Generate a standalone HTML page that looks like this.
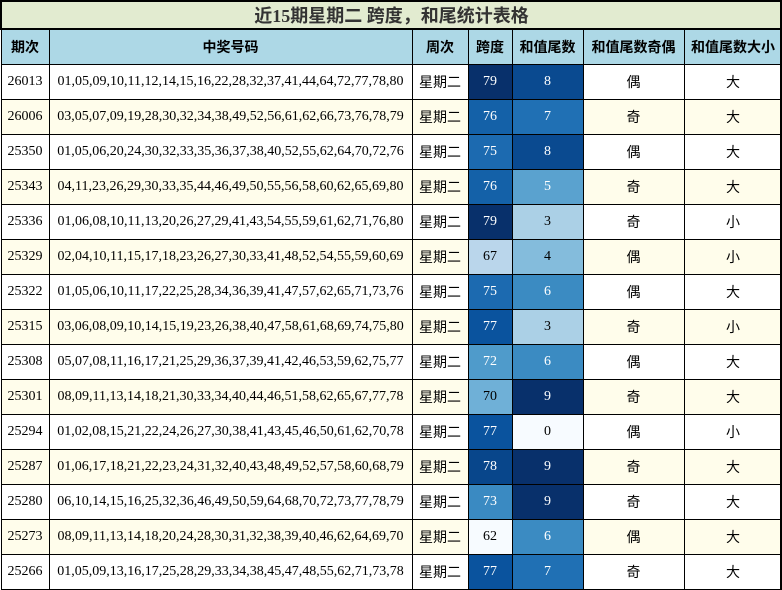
<!DOCTYPE html>
<html><head><meta charset="utf-8"><style>
body{margin:0;width:782px;height:589px;overflow:hidden;background:#fff}
table{border-collapse:collapse;table-layout:fixed;width:781px;position:absolute;left:0;top:0}
td,th{border:1px solid #000;padding:0;text-align:center;overflow:hidden;white-space:nowrap}
.t td{height:26px;background:#e2ebd0;font:bold 18px "Liberation Serif","Noto Sans CJK SC",serif;color:#333;border-width:2px 2px 2px 2px}
th{height:34px;background:#add8e6;font:bold 14px "Liberation Sans","Noto Sans CJK SC",sans-serif;color:#000}
td.d{height:34px;font:14px "Liberation Serif","Noto Sans CJK SC",serif;color:#000}
tr.y td.d{background:#fffdeb}
.c{font-family:"Noto Sans CJK SC",sans-serif!important}
.w{color:#fff!important}
.rb{position:absolute;left:780px;top:0;width:2px;height:589px;background:#000}
</style></head><body>
<table>
<colgroup><col style="width:48px"><col style="width:363px"><col style="width:56px"><col style="width:44px"><col style="width:71px"><col style="width:101px"><col style="width:98px"></colgroup>
<tr class="t"><td colspan="7">近15期星期二 跨度，和尾统计表格</td></tr>
<tr><th>期次</th><th>中奖号码</th><th>周次</th><th>跨度</th><th>和值尾数</th><th>和值尾数奇偶</th><th>和值尾数大小</th></tr>
<tr><td class="d">26013</td><td class="d">01,05,09,10,11,12,14,15,16,22,28,32,37,41,44,64,72,77,78,80</td><td class="d c">星期二</td><td class="d w" style="background:#08306b">79</td><td class="d w" style="background:#0a4a90">8</td><td class="d c">偶</td><td class="d c">大</td></tr>
<tr class="y"><td class="d">26006</td><td class="d">03,05,07,09,19,28,30,32,34,38,49,52,56,61,62,66,73,76,78,79</td><td class="d c">星期二</td><td class="d w" style="background:#1461a8">76</td><td class="d w" style="background:#2070b4">7</td><td class="d c">奇</td><td class="d c">大</td></tr>
<tr><td class="d">25350</td><td class="d">01,05,06,20,24,30,32,33,35,36,37,38,40,52,55,62,64,70,72,76</td><td class="d c">星期二</td><td class="d w" style="background:#1c6ab0">75</td><td class="d w" style="background:#0a4a90">8</td><td class="d c">偶</td><td class="d c">大</td></tr>
<tr class="y"><td class="d">25343</td><td class="d">04,11,23,26,29,30,33,35,44,46,49,50,55,56,58,60,62,65,69,80</td><td class="d c">星期二</td><td class="d w" style="background:#1461a8">76</td><td class="d w" style="background:#5aa2cf">5</td><td class="d c">奇</td><td class="d c">大</td></tr>
<tr><td class="d">25336</td><td class="d">01,06,08,10,11,13,20,26,27,29,41,43,54,55,59,61,62,71,76,80</td><td class="d c">星期二</td><td class="d w" style="background:#08306b">79</td><td class="d" style="background:#abd0e6">3</td><td class="d c">奇</td><td class="d c">小</td></tr>
<tr class="y"><td class="d">25329</td><td class="d">02,04,10,11,15,17,18,23,26,27,30,33,41,48,52,54,55,59,60,69</td><td class="d c">星期二</td><td class="d" style="background:#bad6eb">67</td><td class="d" style="background:#84bcdc">4</td><td class="d c">偶</td><td class="d c">小</td></tr>
<tr><td class="d">25322</td><td class="d">01,05,06,10,11,17,22,25,28,34,36,39,41,47,57,62,65,71,73,76</td><td class="d c">星期二</td><td class="d w" style="background:#1c6ab0">75</td><td class="d w" style="background:#3b8bc2">6</td><td class="d c">偶</td><td class="d c">大</td></tr>
<tr class="y"><td class="d">25315</td><td class="d">03,06,08,09,10,14,15,19,23,26,38,40,47,58,61,68,69,74,75,80</td><td class="d c">星期二</td><td class="d w" style="background:#0a539e">77</td><td class="d" style="background:#abd0e6">3</td><td class="d c">奇</td><td class="d c">小</td></tr>
<tr><td class="d">25308</td><td class="d">05,07,08,11,16,17,21,25,29,36,37,39,41,42,46,53,59,62,75,77</td><td class="d c">星期二</td><td class="d w" style="background:#4f9bcb">72</td><td class="d w" style="background:#3b8bc2">6</td><td class="d c">偶</td><td class="d c">大</td></tr>
<tr class="y"><td class="d">25301</td><td class="d">08,09,11,13,14,18,21,30,33,34,40,44,46,51,58,62,65,67,77,78</td><td class="d c">星期二</td><td class="d" style="background:#6fb0d7">70</td><td class="d w" style="background:#08306b">9</td><td class="d c">奇</td><td class="d c">大</td></tr>
<tr><td class="d">25294</td><td class="d">01,02,08,15,21,22,24,26,27,30,38,41,43,45,46,50,61,62,70,78</td><td class="d c">星期二</td><td class="d w" style="background:#0a539e">77</td><td class="d" style="background:#f7fbff">0</td><td class="d c">偶</td><td class="d c">小</td></tr>
<tr class="y"><td class="d">25287</td><td class="d">01,06,17,18,21,22,23,24,31,32,40,43,48,49,52,57,58,60,68,79</td><td class="d c">星期二</td><td class="d w" style="background:#08468b">78</td><td class="d w" style="background:#08306b">9</td><td class="d c">奇</td><td class="d c">大</td></tr>
<tr><td class="d">25280</td><td class="d">06,10,14,15,16,25,32,36,46,49,50,59,64,68,70,72,73,77,78,79</td><td class="d c">星期二</td><td class="d w" style="background:#3a8ac2">73</td><td class="d w" style="background:#08306b">9</td><td class="d c">奇</td><td class="d c">大</td></tr>
<tr class="y"><td class="d">25273</td><td class="d">08,09,11,13,14,18,20,24,28,30,31,32,38,39,40,46,62,64,69,70</td><td class="d c">星期二</td><td class="d" style="background:#f7fbff">62</td><td class="d w" style="background:#3b8bc2">6</td><td class="d c">偶</td><td class="d c">大</td></tr>
<tr><td class="d">25266</td><td class="d">01,05,09,13,16,17,25,28,29,33,34,38,45,47,48,55,62,71,73,78</td><td class="d c">星期二</td><td class="d w" style="background:#0a539e">77</td><td class="d w" style="background:#2070b4">7</td><td class="d c">奇</td><td class="d c">大</td></tr>
</table>
<div class="rb"></div>
</body></html>
